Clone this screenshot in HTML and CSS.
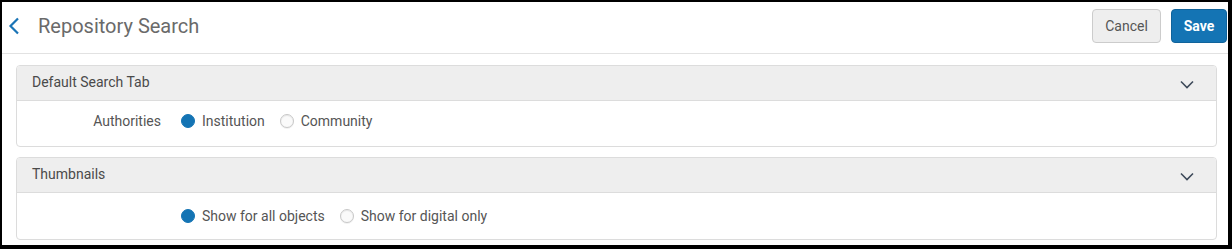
FILE: index.html
```html
<!DOCTYPE html>
<html lang="en">
  <head>
    <meta charset="UTF-8" />
    <title>Repository Search</title>
    <link rel="stylesheet" href="styles.css">
  </head>
  <body>
    <div class="frame">
      <div class="topbar">
        <button class="back-btn" aria-label="Back">
          <svg width="12" height="18" viewBox="0 0 12 18">
            <path d="M10 1.5 L2.5 9 L10 16.5" fill="none" stroke="currentColor" stroke-width="2.2" />
          </svg>
        </button>
        <h1 class="page-title">Repository Search</h1>
        <div class="actions">
          <button class="btn btn-cancel">Cancel</button>
          <button class="btn btn-save">Save</button>
        </div>
      </div>

      <div class="content">
        <!-- Default search tab -->
        <div class="panel">
          <div class="panel-head">
            <span>Default Search Tab</span>
            <svg class="chev" width="14" height="9" viewBox="0 0 14 9">
              <path d="M1 1.5 L7 7.5 L13 1.5" fill="none" stroke="currentColor" stroke-width="1.6" />
            </svg>
          </div>
          <div class="panel-body form-row">
            <div class="field-label">Authorities</div>
            <div class="options">
              <label class="radio"><span class="dot checked"></span>Institution</label>
              <label class="radio"><span class="dot"></span>Community</label>
            </div>
          </div>
        </div>

        <!-- Thumbnails -->
        <div class="panel">
          <div class="panel-head">
            <span>Thumbnails</span>
            <svg class="chev" width="14" height="9" viewBox="0 0 14 9">
              <path d="M1 1.5 L7 7.5 L13 1.5" fill="none" stroke="currentColor" stroke-width="1.6" />
            </svg>
          </div>
          <div class="panel-body tall">
            <div class="field-label"></div>
            <div class="options">
              <label class="radio"><span class="dot checked"></span>Show for all objects</label>
              <label class="radio"><span class="dot"></span>Show for digital only</label>
            </div>
          </div>
        </div>
      </div>
    </div>
  </body>
</html>
```

FILE: styles.css
```css
body {
  margin: 0;
  font-family: Roboto, "Liberation Sans", sans-serif;
  color: #444;
  background: #fff;
}
.frame {
  box-sizing: border-box;
  height: 249px;
  border-style: solid;
  border-color: #000;
  border-width: 2px 4px 4px 2px;
  overflow: hidden;
}
.topbar {
  display: flex;
  align-items: center;
  box-sizing: border-box;
  height: 52px;
  padding: 0 1px 4px 5px;
  border-bottom: 1px solid #e2e2e2;
}
.back-btn {
  background: none;
  border: none;
  padding: 0;
  color: #1a74b6;
  display: grid;
  place-content: center;
  width: 14px;
  height: 20px;
}
.page-title {
  margin: 0 0 0 17px;
  font-size: 20px;
  font-weight: 400;
  color: #6a6a6a;
}
.actions {
  margin-left: auto;
  display: flex;
  gap: 10px;
}
.btn {
  font-family: Roboto, "Liberation Sans", sans-serif;
  font-size: 14px;
  height: 34px;
  border-radius: 4px;
  cursor: pointer;
}
.btn-cancel {
  width: 69px;
  background: #eee;
  border: 1px solid #ccc;
  color: #555;
}
.btn-save {
  width: 56px;
  background: #1474b4;
  border: 1px solid #10639b;
  color: #fff;
  font-weight: 700;
}
.content {
  display: flex;
  flex-direction: column;
  gap: 10px;
  padding: 11px 11px 0 14px;
}
.panel {
  border: 1px solid #dcdcdc;
  border-radius: 4px;
  overflow: hidden;
}
.panel-head {
  display: flex;
  align-items: center;
  justify-content: space-between;
  height: 32px;
  padding: 0 22px 2px 15px;
  background: #eee;
  border-bottom: 1px solid #dcdcdc;
  font-size: 14px;
  color: #4a4a4a;
}
.chev {
  color: #3e4a5a;
  margin-top: 4px;
}
.panel-body {
  display: flex;
  align-items: center;
  box-sizing: border-box;
  height: 45px;
  font-size: 14px;
  color: #555;
}
.panel-body.tall {
  height: 46px;
}
.form-row {
  padding-bottom: 6px;
}
.field-label {
  width: 144px;
  text-align: right;
  padding-right: 20px;
}
.options {
  display: flex;
  gap: 15px;
}
.radio {
  display: flex;
  align-items: center;
  gap: 7px;
}
.dot {
  box-sizing: border-box;
  width: 14px;
  height: 14px;
  border-radius: 50%;
  border: 1px solid #c8c8c8;
  background: #fafafa;
  box-shadow: inset 0 1px 1px rgba(0, 0, 0, 0.08), 0 1px 0 rgba(0, 0, 0, 0.06);
}
.dot.checked {
  border-color: #1474b4;
  background: #1474b4;
  box-shadow: none;
}
```
